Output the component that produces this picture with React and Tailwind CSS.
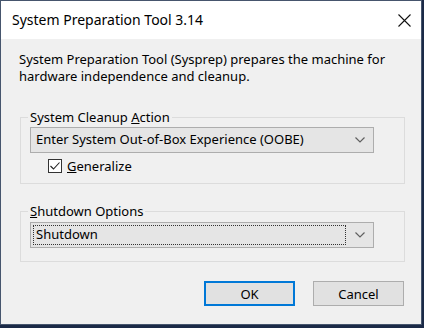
const font = { fontFamily: '"Noto Sans", "Open Sans", sans-serif' }

function Chevron() {
  return (
    <svg width="10" height="6" viewBox="0 0 10 6" className="shrink-0">
      <polyline points="0.5,0.5 5,5 9.5,0.5" fill="none" stroke="#606060" strokeWidth="1.2" />
    </svg>
  )
}

function Combo({ children, focused }) {
  return (
    <div className="ml-[2px] flex h-[26px] w-[344px] items-center border border-[#adadad] bg-[#e5e5e5] pl-[2px] pr-[8px]">
      <div
        className={
          'flex h-[20px] flex-1 items-center pl-[2px] ' +
          (focused ? 'border border-dotted border-[#333]' : 'border border-transparent')
        }
      >
        {children}
      </div>
      <div className="ml-[9px]">
        <Chevron />
      </div>
    </div>
  )
}

export default function App() {
  return (
    <div className="h-[328px] w-[424px] bg-[#1b2a47] text-black" style={font}>
      <div className="flex h-[325px] w-[422px] flex-col border border-[#46556d] bg-[#f0f0f0]">
        {/* title bar */}
        <div className="flex h-[38px] items-center justify-between bg-white pl-[11px] pr-[10px]">
          <span className="text-[14px] leading-[20px]">System Preparation Tool 3.14</span>
          <svg width="13" height="13" viewBox="0 0 13 13">
            <path d="M0.5 0.5 L12.5 12.5 M12.5 0.5 L0.5 12.5" stroke="#111" strokeWidth="1.1" />
          </svg>
        </div>

        <div className="flex flex-col pl-[18px] pr-[17px] pt-[12px] text-[13px]">
          <p className="leading-[17px]">
            System Preparation Tool (Sysprep) prepares the machine for
            <br />
            hardware independence and cleanup.
          </p>

          <fieldset className="ml-[1px] mt-[24px] w-[385px] border border-[#dcdcdc] pb-[9px] pl-[7px]">
            <legend className="px-[2px] leading-[16px]">
              System Cleanup <span className="underline">A</span>ction
            </legend>
            <div className="mt-[2px]">
              <Combo>Enter System Out-of-Box Experience (OOBE)</Combo>
            </div>
            <label className="ml-[20px] mt-[5px] flex items-center gap-[5px]">
              <span className="flex h-[14px] w-[14px] items-center justify-center border border-[#333] bg-white">
                <svg width="12" height="12" viewBox="0 0 12 12">
                  <polyline points="1.5,6 4.5,9 10.5,2.5" fill="none" stroke="#222" strokeWidth="1.1" />
                </svg>
              </span>
              <span className="leading-[16px]">
                <span className="underline">G</span>eneralize
              </span>
            </label>
          </fieldset>

          <fieldset className="ml-[1px] mt-[19px] w-[385px] border border-[#dcdcdc] pb-[13px] pl-[7px]">
            <legend className="px-[2px] leading-[16px]">
              <span className="underline">S</span>hutdown Options
            </legend>
            <div className="mt-[3px]">
              <Combo focused>Shutdown</Combo>
            </div>
          </fieldset>

          <div className="mt-[19px] flex justify-end gap-[18px]">
            <button className="h-[25px] w-[91px] border-2 border-[#0078d7] bg-[#e1e1e1] leading-[16px]">
              OK
            </button>
            <button className="h-[25px] w-[91px] border border-[#adadad] bg-[#e1e1e1] leading-[16px]">
              Cancel
            </button>
          </div>
        </div>
      </div>
    </div>
  )
}
